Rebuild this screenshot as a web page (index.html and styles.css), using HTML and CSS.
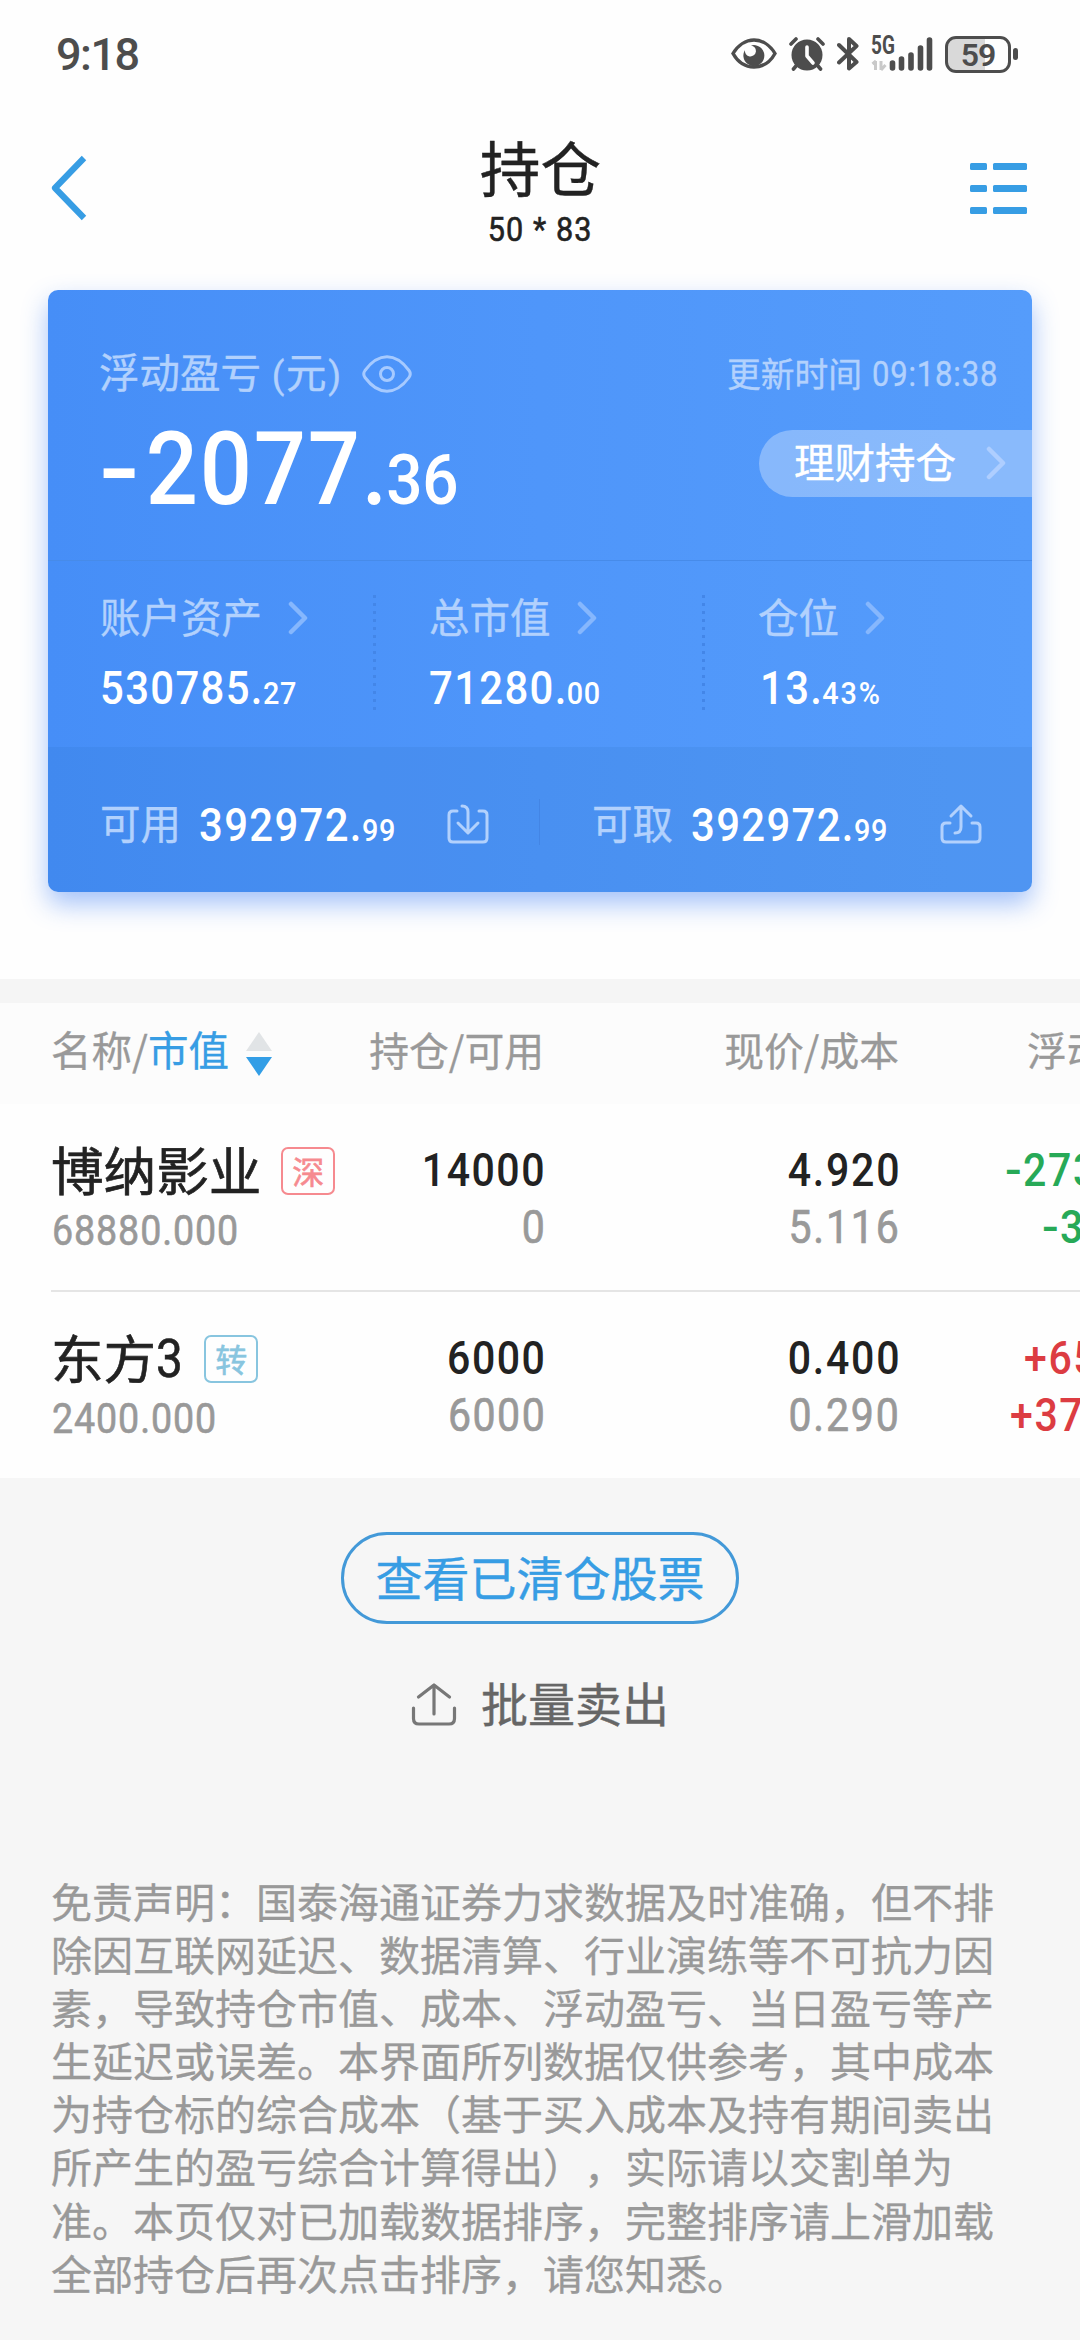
FILE: index.html
```html
<!DOCTYPE html>
<html lang="zh-CN">
<head>
<meta charset="utf-8">
<title>持仓</title>
<link rel="stylesheet" href="styles.css">
</head>
<body>
<div class="page">
  <header class="status">
    <span class="clock">9:18</span>
    <div class="status-icons">
      <svg width="46" height="36" viewBox="0 0 46 36"><path d="M2 17.500C7 9 15 4 23 4S39 9 44 17.500C39 26.500 31 31 23 31S7 26.500 2 17.500Z" fill="none" stroke="#4d4d4d" stroke-width="3.400"/><path d="M14 14A5.500 5.500 0 1 0 20 9.500A10.500 10.500 0 1 1 13 16Z" fill="#4d4d4d"/></svg>
      <svg width="36" height="36" viewBox="0 0 36 36"><circle cx="18" cy="19" r="15.500" fill="#4d4d4d"/><path d="M2 8L7 3M34 8L29 3M7 30L4.500 33M29 30L31.500 33" stroke="#4d4d4d" stroke-width="3.600" stroke-linecap="round"/><path d="M18 11V20L24 27" fill="none" stroke="#fff" stroke-width="3.600" stroke-linecap="round" stroke-linejoin="round"/></svg>
      <svg width="22" height="38" viewBox="0 0 22 38"><path d="M2 10L19.500 27L12 33.500V4L19.500 11L2 27.500" fill="none" stroke="#4d4d4d" stroke-width="4" stroke-linejoin="round" stroke-linecap="round"/></svg>
      <div class="signal">
        <span class="net">5G</span>
        <svg width="62" height="36" viewBox="0 0 62 36"><path d="M4.500 34V25M1.500 28L5 25M10 25V34M10 34L14.500 29" fill="none" stroke="#c9c9c9" stroke-width="3"/><path d="M21.500 27V32M30.500 23V32M40 19V32M49.500 12V32M58.500 4V32" stroke="#4d4d4d" stroke-width="5.600" stroke-linecap="round"/></svg>
      </div>
      <div class="battery"><span class="cell">59</span><i class="nub"></i></div>
    </div>
  </header>

  <nav class="nav">
    <svg class="back" width="40" height="70" viewBox="0 0 40 70"><path d="M34 5L5 35L34 65" fill="none" stroke="#379de4" stroke-width="6.200" stroke-linejoin="round"/></svg>
    <div class="titles">
      <h1>持仓</h1>
      <span class="num account">50 * 83</span>
    </div>
    <svg class="menu" width="58" height="52" viewBox="0 0 58 52" fill="#379de4"><rect x="0" y="0" width="17" height="7" rx="1.500"/><rect x="23" y="0" width="34" height="7" rx="1.500"/><rect x="0" y="22" width="17" height="7" rx="1.500"/><rect x="23" y="22" width="34" height="7" rx="1.500"/><rect x="0" y="44" width="17" height="7" rx="1.500"/><rect x="23" y="44" width="34" height="7" rx="1.500"/></svg>
  </nav>

  <section class="card">
    <div class="summary">
      <div class="line">
        <span class="label">浮动盈亏 <span class="paren">(</span>元<span class="paren">)</span></span>
        <svg class="eye" width="50" height="38" viewBox="0 0 50 38" fill="none" stroke="currentColor" stroke-width="3"><path d="M3 15.500C10 6 17 1.800 25 1.800S40 6 47 15.500Q49.500 19 47 22.500C40 32 33 36.200 25 36.200S10 32 3 22.500Q.5 19 3 15.500Z"/><circle cx="25" cy="19" r="6.500"/></svg>
        <span class="updated">更新时间<span class="num time">09:18:38</span></span>
      </div>
      <div class="line main">
        <span class="num profit"><b class="minus">-</b>2077.<small>36</small></span>
        <div class="wealth">理财持仓<svg class="chev" width="20" height="34" viewBox="0 0 20 34"><path d="M3 3L17 17L3 31"/></svg></div>
      </div>
    </div>
    <div class="stats">
      <div class="stat"><div class="label">账户资产<svg class="chev" width="20" height="34" viewBox="0 0 20 34"><path d="M3 3L17 17L3 31"/></svg></div><span class="num amount">530785.<small>27</small></span></div>
      <div class="stat"><div class="label">总市值<svg class="chev" width="20" height="34" viewBox="0 0 20 34"><path d="M3 3L17 17L3 31"/></svg></div><span class="num amount">71280.<small>00</small></span></div>
      <div class="stat"><div class="label">仓位<svg class="chev" width="20" height="34" viewBox="0 0 20 34"><path d="M3 3L17 17L3 31"/></svg></div><span class="num amount ratio">13.<small>43%</small></span></div>
    </div>
    <div class="cash">
      <div class="fund"><span class="label">可用</span><span class="num amount">392972.<small>99</small></span>
        <svg class="io" width="42" height="42" viewBox="0 0 42 42"><path d="M10 8H6Q2 8 2 12V35Q2 39 6 39H36Q40 39 40 35V12Q40 8 36 8H32M15 3Q21 3 21 9V29M11 20L21 30L31 20"/></svg>
      </div>
      <div class="fund"><span class="label">可取</span><span class="num amount">392972.<small>99</small></span>
        <svg class="io" width="42" height="42" viewBox="0 0 42 42"><path d="M10 20H6Q2 20 2 24V35Q2 39 6 39H36Q40 39 40 35V24Q40 20 36 20H32M15 30Q21 30 21 24V3M11 13L21 3L31 13"/></svg>
      </div>
    </div>
  </section>

  <section class="holdings">
    <div class="row head">
      <div class="c1">名称/<span class="sorted">市值</span><svg width="26" height="44" viewBox="0 0 26 44"><path d="M13 0L26 19H0Z" fill="#e1e4e6"/><path d="M13 44L26 25H0Z" fill="#339ee6"/></svg></div>
      <div class="c2">持仓/可用</div>
      <div class="c3">现价/成本</div>
      <div class="c4">浮动盈亏</div>
    </div>
    <div class="row stock">
      <div class="c1"><div class="name">博纳影业<span class="tag red">深</span></div><span class="num value">68880.000</span></div>
      <div class="c2"><span class="num">14000</span><span class="num sub">0</span></div>
      <div class="c3"><span class="num">4.920</span><span class="num sub">5.116</span></div>
      <div class="c4 down"><span class="num p1"><i>-</i>273</span><span class="num p2"><i>-</i>3.</span></div>
    </div>
    <div class="row stock">
      <div class="c1"><div class="name">东方<span class="num digit">3</span><span class="tag cyan">转</span></div><span class="num value">2400.000</span></div>
      <div class="c2"><span class="num">6000</span><span class="num sub">6000</span></div>
      <div class="c3"><span class="num">0.400</span><span class="num sub">0.290</span></div>
      <div class="c4 up"><span class="num p3">+65</span><span class="num p4">+37</span></div>
    </div>
  </section>

  <footer class="bottom">
    <div class="cleared">查看已清仓股票</div>
    <div class="batch"><svg width="46" height="46" viewBox="0 0 46 46" fill="none" stroke="#777" stroke-width="3.200" stroke-linecap="round" stroke-linejoin="round"><path d="M2.500 26V36.500Q2.500 42 8 42H38Q43.500 42 43.500 36.500V26M23 32V3M7.500 15L23 3L38.500 15"/></svg>批量卖出</div>
    <p>免责声明：国泰海通证券力求数据及时准确，但不排<br>除因互联网延迟、数据清算、行业演练等不可抗力因<br>素，导致持仓市值、成本、浮动盈亏、当日盈亏等产<br>生延迟或误差。本界面所列数据仅供参考，其中成本<br>为持仓标的综合成本（基于买入成本及持有期间卖出<br>所产生的盈亏综合计算得出），实际请以交割单为<br>准。本页仅对已加载数据排序，完整排序请上滑加载<br>全部持仓后再次点击排序，请您知悉。</p>
  </footer>
</div>
</body>
</html>
```
FILE: styles.css
```css
* { box-sizing: border-box; }
body { margin: 0; background: #f6f6f6; font-family: "Noto Sans CJK SC", sans-serif; color: #222; -webkit-text-stroke: .4px; }
svg { display: block; flex: none; }
.page { width: 1080px; height: 2340px; overflow: hidden; display: flex; flex-direction: column; background: #fefefe; }
.num { display: inline-block; font-family: Roboto, sans-serif; font-weight: 500; transform: scaleX(.9); transform-origin: left center; white-space: nowrap; -webkit-text-stroke: 0; }

.status { height: 108px; padding: 0 62px 0 56px; display: flex; align-items: center; justify-content: space-between; color: #4d4d4d; font-family: Roboto, sans-serif; -webkit-text-stroke: 0; }
.clock { font-size: 45px; font-weight: 500; line-height: 108px; padding-top: 2px; letter-spacing: -1.5px; }
.status-icons { display: flex; align-items: center; gap: 12px; }
.signal { position: relative; }
.net { position: absolute; left: 0; top: -1px; font-size: 25px; line-height: 22px; font-weight: 700; transform: scaleX(.76); transform-origin: left; }
.battery { display: flex; align-items: center; gap: 2px; }
.cell { width: 66px; height: 37px; border: 3px solid #4d4d4d; border-radius: 11px; font-size: 32px; font-weight: 600; line-height: 32px; text-align: center; background: linear-gradient(90deg, #d9d9d9 61%, #fefefe 61%); letter-spacing: -1px; }
.nub { width: 5px; height: 12px; border-radius: 3px; background: #4d4d4d; }

.nav { height: 182px; padding: 23px 52px 0 50px; display: flex; justify-content: space-between; }
.back { margin-top: 22px; }
.menu { margin-top: 32px; }
.titles { display: flex; flex-direction: column; align-items: center; padding-left: 21px; }
.titles h1 { margin: 0; font-size: 60.700px; font-weight: 400; line-height: 70px; }
.account { font-size: 34px; line-height: 40px; margin-top: 8px; font-weight: 400; transform-origin: center; letter-spacing: 1.200px; -webkit-text-stroke: .6px; }

.card { width: 984px; height: 602px; margin: 0 48px; flex: none; border-radius: 10px; overflow: hidden; color: #fff; background: linear-gradient(90deg, #468ef7, #4f96fa 50%, #559cfb); box-shadow: 0 12px 26px rgba(66, 130, 245, .48); }
.label, .updated { color: #b2d1fd; font-size: 40.500px; line-height: 60px; }
.summary { display: flow-root; height: 271px; border-bottom: 1px solid #478be9; }
.line { display: flex; align-items: center; height: 60px; padding-left: 51px; }
.summary .line:first-child { margin-top: 53px; }
.eye { color: #a6caff; margin-left: 19px; margin-top: 1px; }
.paren { display: inline-block; width: 16px; text-align: center; font-family: Roboto, sans-serif; font-weight: 400; font-size: 37px; }
.updated { font-size: 33.750px; margin-left: auto; width: 305px; display: flex; }
.time { font-size: 34.500px; font-weight: 400; margin-left: 10px; padding-top: 1px; letter-spacing: .9px; -webkit-text-stroke: .4px; }
.main { height: 72px; margin-top: 24px; }
.profit { font-size: 102px; line-height: 72px; letter-spacing: 2px; padding-top: 22px; }
.profit small { font-size: 71px; letter-spacing: -.5px; margin-left: -3px; }
.minus { display: inline-block; width: 52px; font-weight: 500; transform: scaleX(1.300); transform-origin: left; }
.wealth { width: 273px; height: 67px; margin-left: auto; border-radius: 34px 0 0 34px; background: rgba(255, 255, 255, .31); padding-left: 35px; display: flex; align-items: center; font-size: 40.500px; line-height: 64px; padding-bottom: 5px; }
.chev { margin-left: 28px; fill: none; stroke: #86b7fd; stroke-width: 4.500; stroke-linecap: round; stroke-linejoin: round; }
.wealth .chev { stroke: #aeceff; margin-left: 30px; margin-top: 4px; }
.stats { height: 186px; display: grid; grid-template-columns: 328px 329px 327px; }
.stat { height: 115px; margin-top: 34px; padding-left: 52px; background: repeating-linear-gradient(180deg, #4386e8 0 3px, transparent 3px 8px) right 0 top 0 / 3px 115px no-repeat; }
.stat + .stat { padding-left: 53px; }
.stat:last-child { background: none; }
.stat .label { display: flex; align-items: center; line-height: 42px; height: 42px; }
.stat .label .chev { margin-top: 4px; }
.stat .chev { margin-left: 26px; }
.amount { font-size: 46.500px; line-height: 60px; letter-spacing: 1.500px; }
.amount small { font-size: 32px; letter-spacing: .7px; margin-left: -1px; }
.stat .amount { margin-top: 21px; }
.stat .ratio { margin-left: 2px; }
.ratio small { letter-spacing: 2px; }
.cash { height: 145px; display: flex; background: rgba(40, 105, 185, .13); }
.fund { width: 492px; padding: 9px 0 0 52px; display: flex; align-items: center; height: 145px; }
.fund .label { width: 99px; padding-bottom: 5px; }
.fund .amount { width: 248px; padding-top: 7px; }
.fund:first-child { background: linear-gradient(#4385e5, #4385e5) right 0 top 52px / 1px 46px no-repeat; }
.fund + .fund .amount { width: 249px; }
.io { fill: none; stroke: #b2d1fd; stroke-width: 3; stroke-linecap: round; stroke-linejoin: round; }

.holdings { margin-top: 87px; border-top: 24px solid #f5f5f5; flex: none; background: #fefefe; overflow: hidden; }
.row { display: grid; grid-template-columns: 280px 213px 355px 181px; padding-left: 51px; }
.head { height: 101px; background: #fcfcfc; color: #999; font-size: 39.800px; line-height: 92px; -webkit-text-stroke: .3px; }
.head .c1 { display: flex; align-items: center; height: 101px; padding-bottom: 9px; font-size: 40.500px; }
.head svg { margin: 10px 0 0 17px; }
.sorted { color: #379de4; }
.c2, .c3 { text-align: right; }
.c4 { padding-left: 128px; white-space: nowrap; }
.stock { height: 186px; }
.stock + .stock { height: 188px; padding-top: 2px; background: linear-gradient(#e5e5e5, #e5e5e5) 51px 0 / 1029px 2px no-repeat; }
.name { display: flex; align-items: center; font-size: 52.600px; line-height: 60px; height: 60px; margin-top: 34px; white-space: nowrap; -webkit-text-stroke: .6px; }
.name .digit { font-size: 53px; font-weight: 400; width: 28px; -webkit-text-stroke: .6px; padding-top: 5px; }
.tag { width: 54px; height: 48px; margin: 6px 0 0 20px; border: 2px solid; border-radius: 7px; font-size: 32px; line-height: 42px; text-align: center; flex: none; }
.red { color: #f68a8f; }
.cyan { color: #88c5df; }
.value { font-size: 41.800px; line-height: 50px; font-weight: 400; color: #999; margin-top: 8px; margin-left: 1px; letter-spacing: 1px; -webkit-text-stroke: .6px; }
.stock .c2, .stock .c3, .stock .c4 { display: flex; flex-direction: column; padding-top: 38px; font-size: 45.600px; line-height: 57px; }
.stock .c2, .stock .c3 { align-items: flex-end; }
.c2 .num, .c3 .num { transform-origin: right center; margin-right: -2px; letter-spacing: 1.700px; }
.c3 .num { letter-spacing: 2px; }
.c4 .num { letter-spacing: 1.800px; }
.stock .sub { color: #999; font-weight: 400; -webkit-text-stroke: .7px; }
.c4 i { display: inline-block; font-style: normal; width: 20px; transform: scaleX(1.200); transform-origin: left; }
.down { color: #27a957; }
.up { color: #dc3c42; }
.stock .c4 { padding-left: 106px; }
.p2 { margin-left: 37px; }
.p3 { margin-left: 19px; }
.p4 { margin-left: 5px; }

.bottom { flex: 1; background: #f6f6f6; padding-top: 54px; display: flex; flex-direction: column; align-items: center; }
.cleared { width: 398px; height: 92px; border: 3px solid #4399d8; border-radius: 46px; color: #379de4; font-size: 47px; line-height: 81px; text-align: center; white-space: nowrap; }
.batch { display: flex; align-items: center; gap: 24px; margin-top: 43px; color: #666; font-size: 47px; line-height: 70px; }
.batch svg { margin-top: 6px; }
.bottom p { align-self: stretch; margin: 137px 0 0 51px; color: #999; font-size: 41px; line-height: 53.100px; white-space: nowrap; text-spacing-trim: space-all; font-feature-settings: "chws" 0, "halt" 0; -webkit-text-stroke: .3px; }
```
